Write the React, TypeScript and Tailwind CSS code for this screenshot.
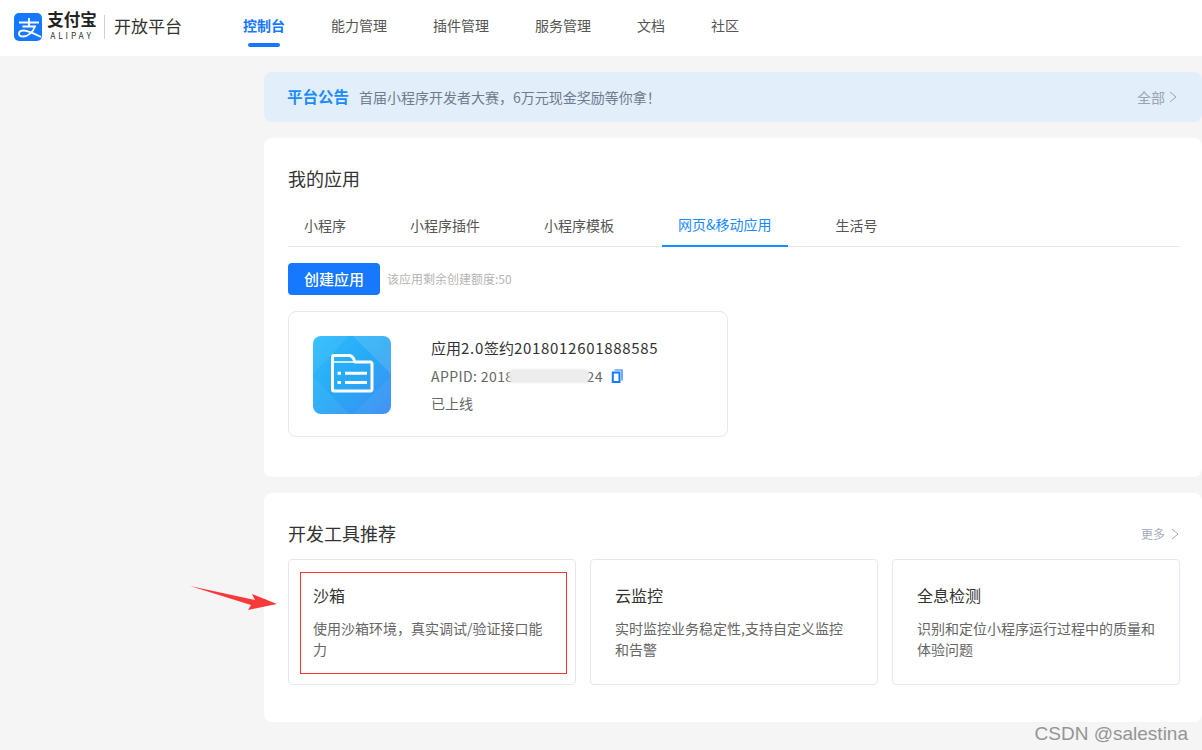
const navItems = ["控制台", "能力管理", "插件管理", "服务管理", "文档", "社区"]

const tabs = ["小程序", "小程序插件", "小程序模板", "网页&移动应用", "生活号"]

const tools = [
  { name: "沙箱", desc: "使用沙箱环境，真实调试/验证接口能力" },
  { name: "云监控", desc: "实时监控业务稳定性,支持自定义监控和告警" },
  { name: "全息检测", desc: "识别和定位小程序运行过程中的质量和体验问题" },
]

function Chevron({ className }: { className?: string }) {
  return (
    <svg viewBox="0 0 8 12" fill="none" stroke="currentColor" strokeWidth="1" className={className}>
      <path d="M1 1l6 5-6 5" />
    </svg>
  )
}

function AlipayMark() {
  return (
    <svg viewBox="0 0 28 28" className="h-7 w-7 shrink-0">
      <rect width="28" height="28" rx="5" fill="#1677ff" />
      <path
        d="M5 9.500H25M15 5v8.500M8.500 13.500H21C19 19 14 23.500 9 23.500 6 23.500 5 22 5 20.500 5 18.500 7 17.500 10 17.500 14 17.500 20 20.500 27 24"
        fill="none"
        stroke="#fff"
        strokeWidth="1.800"
      />
    </svg>
  )
}

function AppIcon() {
  return (
    <div className="h-[78px] w-[78px] shrink-0 overflow-hidden rounded-lg bg-gradient-to-br from-[#2fbdfd] via-[#27a9f5] to-[#3a8cf2]">
      <svg viewBox="0 0 78 78" className="h-full w-full">
        <path d="M0 0H36L0 38z" fill="#fff" opacity="0.06" />
        <path d="M40 0H78V38z" fill="#fff" opacity="0.12" />
        <path d="M0 40V78H36z" fill="#fff" opacity="0.06" />
        <path d="M78 40V78H40z" fill="#fff" opacity="0.05" />
        <path
          d="M19.500 21a1.500 1.500 0 011.500-1.500h15c2.500 0 3.500 1 4.500 3l1.500 3.500h15.500a1.500 1.500 0 011.500 1.500v26a1.500 1.500 0 01-1.500 1.500H21a1.500 1.500 0 01-1.500-1.500z"
          fill="none"
          stroke="#fff"
          strokeWidth="3"
          strokeLinejoin="round"
        />
        <path d="M19.500 26h22" stroke="#fff" strokeWidth="1.500" />
        <path d="M24.500 37.300h3.500M24.500 46.600h3.500M32 37.300h22M32 46.600h22" stroke="#fff" strokeWidth="3" />
      </svg>
    </div>
  )
}

export default function App() {
  return (
    <div className="relative min-h-[750px] overflow-hidden bg-[#f5f5f5] font-['Noto_Sans_CJK_SC','Liberation_Sans',sans-serif]">
      {/* Header */}
      <header className="flex h-14 items-center bg-white pb-0.5 pl-3.5">
        <AlipayMark />
        <div className="ml-[5px] flex w-[50px] flex-col items-center">
          <span className="-mt-1 text-[16.500px] leading-[18px] font-bold text-[#222]">支付宝</span>
          <span className="mt-[3px] text-[8.500px] leading-[9px] tracking-[2.800px] text-[#333]">ALIPAY</span>
        </div>
        <div className="mr-[9px] ml-[7px] h-6 w-px bg-[#d0d0d0]" />
        <span className="-mt-0.5 text-[17px] text-[#333]">开放平台</span>
        <nav className="ml-[61px] flex gap-[46px] self-stretch">
          {navItems.map((item, i) => (
            <div key={item} className="relative flex items-center pb-1">
              <span className={i === 0 ? "text-[14px] font-bold text-[#1677ff]" : "text-[14px] text-[#555]"}>
                {item}
              </span>
              {i === 0 && <div className="absolute bottom-[7px] left-[5px] h-1 w-8 rounded-full bg-[#1677ff]" />}
            </div>
          ))}
        </nav>
      </header>

      <main className="ml-[264px] flex flex-col gap-4 pt-4">
        {/* Notice */}
        <div className="flex h-[50px] items-center rounded-lg bg-[#e3eefb] pr-[25px] pl-[23px]">
          <span className="text-[15.500px] font-bold text-[#1a8cff]">平台公告</span>
          <span className="ml-[10px] text-[14px] text-[#6f7c8f]">首届小程序开发者大赛，6万元现金奖励等你拿！</span>
          <span className="ml-auto flex items-center gap-1 text-[14px] text-[#97a3b4]">
            全部
            <Chevron className="h-3 w-2" />
          </span>
        </div>

        {/* My apps */}
        <section className="h-[339px] rounded-lg bg-white pt-[26px] pr-[22px] pl-6">
          <h2 className="text-[18px] leading-7 text-[#333]">我的应用</h2>
          <div className="mt-[14px] flex h-[41px] gap-8 border-b border-[#e8e8e8]">
            {tabs.map((tab, i) => (
              <div
                key={tab}
                className={
                  i === 3
                    ? "-mb-px flex items-center border-b-2 border-[#1a8cff] px-4 pb-0.5 text-[14px] text-[#1a8cff]"
                    : "flex items-center px-4 pb-0.5 text-[14px] text-[#555]"
                }
              >
                {tab}
              </div>
            ))}
          </div>
          <div className="mt-4 flex items-center">
            <button className="h-8 w-[92px] rounded bg-[#1677ff] text-[15px] font-medium text-white">创建应用</button>
            <span className="ml-[7px] text-[12px] text-[#b5b5b5]">该应用剩余创建额度:50</span>
          </div>
          <div className="mt-4 flex h-[126px] w-[440px] items-center rounded-lg border border-[#e6e8f0] pt-0.5 pl-6">
            <AppIcon />
            <div className="ml-10 flex flex-col">
              <span className="text-[15px] leading-[26px] text-[#333]">
                应用<span className="tracking-[0.7px]">2.0</span>签约
                <span className="tracking-[0.7px]">2018012601888585</span>
              </span>
              <div className="relative mt-[3px] flex items-center text-[14px] leading-6 tracking-[0.4px] text-[#666]">
                <span>APPID: 2018</span>
                <span className="w-[73px]" />
                <span>24</span>
                <svg viewBox="0 0 12 14" className="ml-[8px] h-[14px] w-3" fill="none" stroke="#1677ff">
                  <path d="M3.500 1h7.500v10.500" strokeWidth="1.200" />
                  <path d="M1.800 3.500h6.700v9.500H1.800z" strokeWidth="2" />
                </svg>
                <span className="absolute top-[5px] left-[78px] h-[14px] w-[80px] rounded-sm bg-[#ececec] blur-[1px]" />
              </div>
              <span className="mt-[3px] text-[14px] leading-6 text-[#666]">已上线</span>
            </div>
          </div>
        </section>

        {/* Dev tools */}
        <section className="h-[229px] rounded-lg bg-white pt-[26px] pr-[22px] pl-6">
          <div className="flex items-center justify-between">
            <h2 className="text-[18px] leading-7 text-[#333]">开发工具推荐</h2>
            <span className="mt-0.5 mr-px flex items-center gap-1.5 text-[12px] text-[#a3abb8]">
              更多
              <Chevron className="h-3 w-2" />
            </span>
          </div>
          <div className="mt-3 grid grid-cols-3 gap-3.5">
            {tools.map((tool) => (
              <div key={tool.name} className="h-[126px] rounded border border-[#e4e7ef] px-6 pt-[23px]">
                <h3 className="text-[16px] leading-6 text-[#333]">{tool.name}</h3>
                <p className="mt-[11px] text-[14px] leading-[21px] text-[#666]">{tool.desc}</p>
              </div>
            ))}
          </div>
        </section>
      </main>

      {/* Annotations on top of the screenshot */}
      <div className="absolute top-[572px] left-[300px] h-[102px] w-[267px] border border-[#f33]" />
      <svg viewBox="0 0 90 26" className="absolute top-[585px] left-[189px] h-[26px] w-[90px]">
        <path d="M1 1L66 15 63 9 88 19 59 25 62 20z" fill="#f8393a" />
      </svg>
      <span className="absolute top-[720px] right-[14px] font-['Liberation_Sans',sans-serif] text-[19px] text-[#949494]">
        CSDN @salestina
      </span>
    </div>
  )
}
